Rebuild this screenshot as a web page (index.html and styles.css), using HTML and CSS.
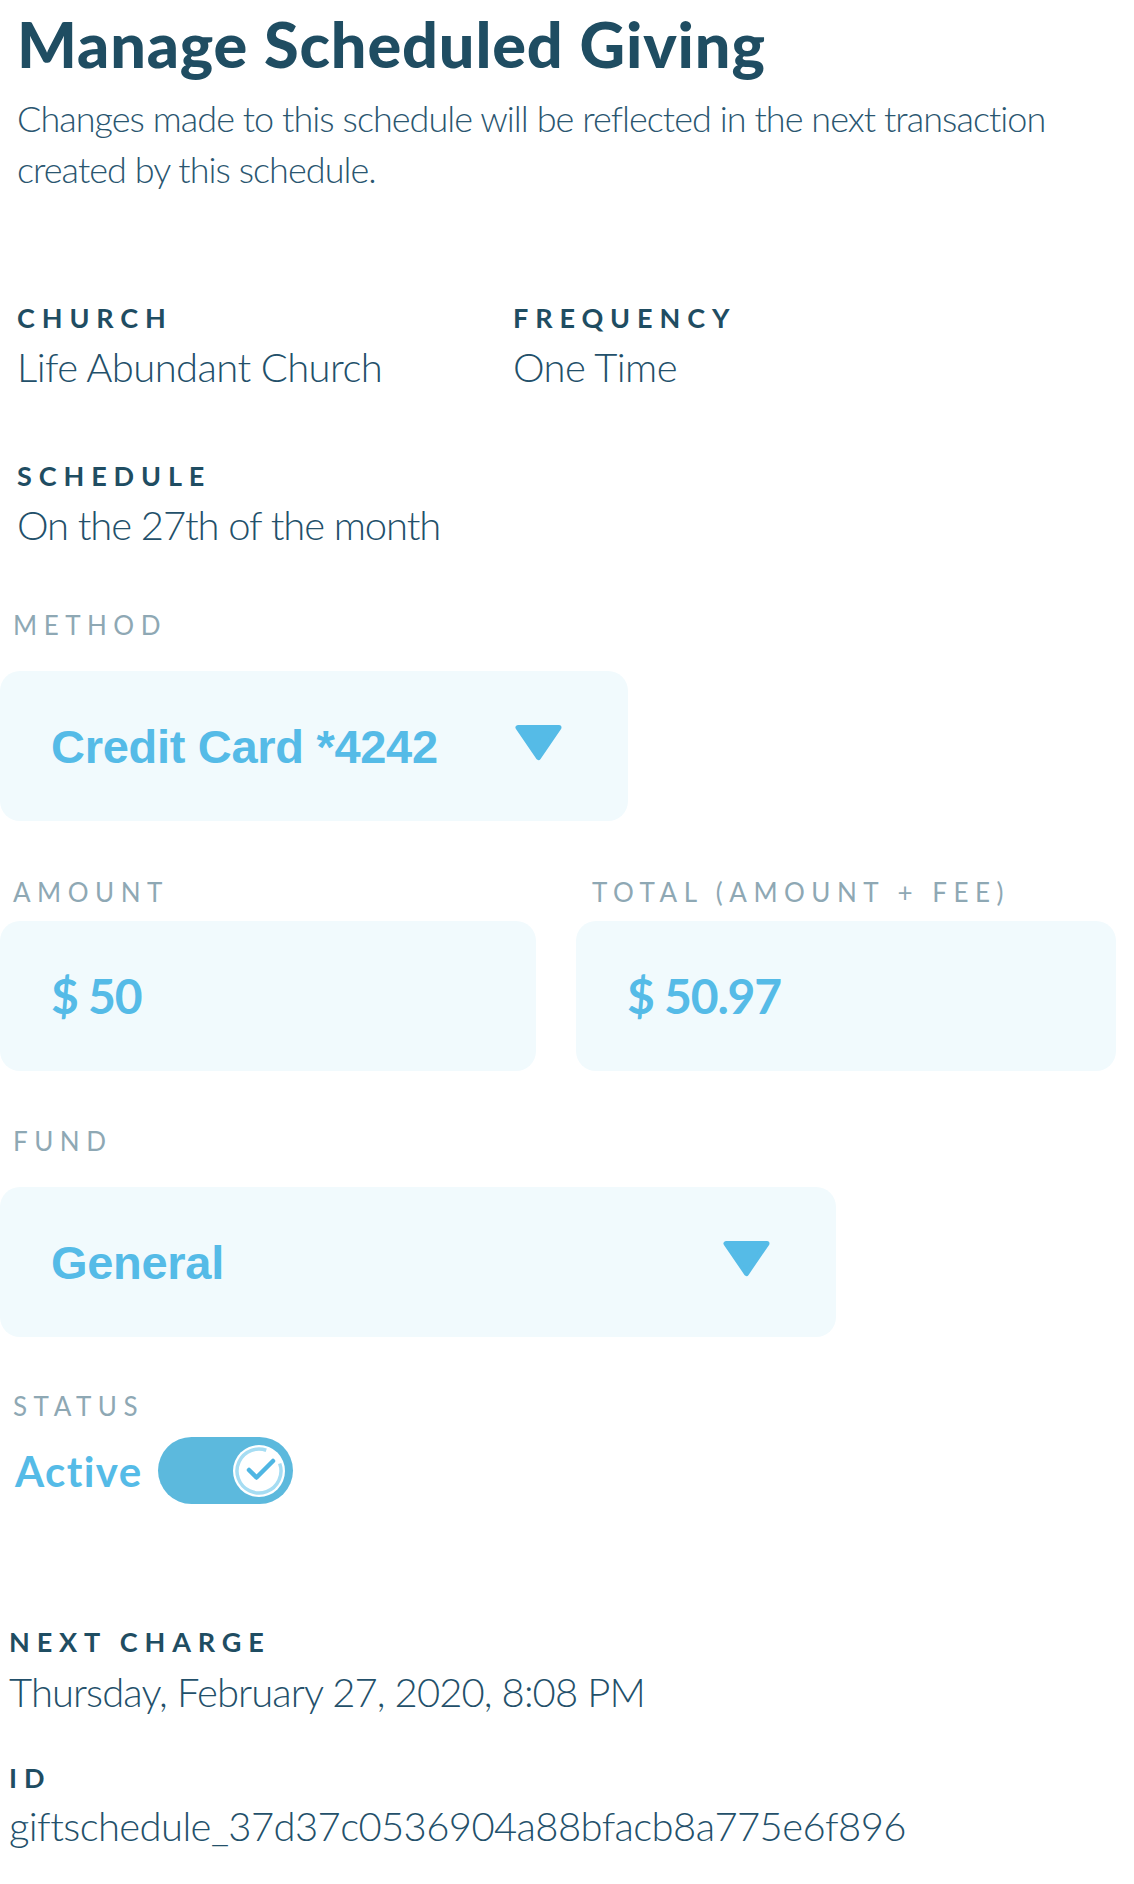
FILE: index.html
```html
<!DOCTYPE html>
<html lang="en">
<head>
<meta charset="utf-8">
<title>Manage Scheduled Giving</title>
<link rel="stylesheet" href="styles.css">
</head>
<body>
<main class="page">
  <header class="intro">
    <h1 class="title">Manage Scheduled Giving</h1>
    <p class="lead">Changes made to this schedule will be reflected in the next transaction created by this schedule.</p>
  </header>

  <section class="details">
    <div class="detail-row">
      <div class="detail">
        <div class="detail-label">Church</div>
        <div class="detail-value">Life Abundant Church</div>
      </div>
      <div class="detail">
        <div class="detail-label">Frequency</div>
        <div class="detail-value">One Time</div>
      </div>
    </div>
    <div class="detail detail-schedule">
      <div class="detail-label">Schedule</div>
      <div class="detail-value">On the 27th of the month</div>
    </div>
  </section>

  <section class="form">
    <div class="field field-method">
      <div class="field-label">Method</div>
      <div class="select select-method">
        <span class="select-text">Credit Card *4242</span>
        <svg class="caret" width="49" height="37" viewBox="0 0 49 37" aria-hidden="true"><path d="M4 3.5 H45 L24.5 33.5 Z" fill="#55bbe7" stroke="#55bbe7" stroke-width="5" stroke-linejoin="round"/></svg>
      </div>
    </div>

    <div class="field-row">
      <div class="field field-amount">
        <div class="field-label">Amount</div>
        <div class="money-box"><span class="money">$ 50</span></div>
      </div>
      <div class="field field-total">
        <div class="field-label">Total (Amount + Fee)</div>
        <div class="money-box"><span class="money">$ 50.97</span></div>
      </div>
    </div>

    <div class="field field-fund">
      <div class="field-label">Fund</div>
      <div class="select select-fund">
        <span class="select-text">General</span>
        <svg class="caret" width="49" height="37" viewBox="0 0 49 37" aria-hidden="true"><path d="M4 3.5 H45 L24.5 33.5 Z" fill="#55bbe7" stroke="#55bbe7" stroke-width="5" stroke-linejoin="round"/></svg>
      </div>
    </div>

    <div class="field field-status">
      <div class="field-label">Status</div>
      <div class="status-row">
        <span class="status-text">Active</span>
        <span class="toggle">
          <svg class="knob" width="54" height="54" viewBox="0 0 54 54" aria-hidden="true">
            <circle cx="27" cy="27" r="26" fill="#ffffff"/>
            <circle cx="27" cy="27" r="22" fill="none" stroke="#a6ddf3" stroke-width="3.5" stroke-dasharray="118 20" transform="rotate(-20 27 27)"/>
            <circle cx="27" cy="27" r="19.5" fill="#ffffff"/>
            <path d="M17 26 L24.5 33.5 L41 17" fill="none" stroke="#4fb6e3" stroke-width="4.5" stroke-linecap="round" stroke-linejoin="round"/>
          </svg>
        </span>
      </div>
    </div>
  </section>

  <section class="meta">
    <div class="meta-item">
      <div class="detail-label">Next Charge</div>
      <div class="detail-value">Thursday, February 27, 2020, 8:08 PM</div>
    </div>
    <div class="meta-item meta-id">
      <div class="detail-label">ID</div>
      <div class="detail-value">giftschedule_37d37c0536904a88bfacb8a775e6f896</div>
    </div>
  </section>
</main>
</body>
</html>
```

FILE: styles.css
```css
* { box-sizing: border-box; }

html, body {
  margin: 0;
  padding: 0;
  background: #ffffff;
}

body {
  font-family: "Lato", "Open Sans", sans-serif;
  color: #23506a;
  width: 1134px;
}

.page {
  display: flex;
  flex-direction: column;
}

/* Intro */
.intro {
  padding-left: 17px;
}

.title {
  margin: 7px 0 0;
  font-size: 63px;
  line-height: 74px;
  font-weight: 900;
  color: #1f4d62;
  letter-spacing: 0.85px;
}

.lead {
  margin: 12px 0 0;
  font-size: 36px;
  line-height: 51px;
  font-weight: 300;
  color: #2a5670;
  letter-spacing: -0.95px;
  max-width: 1080px;
}

/* Details */
.details {
  padding-left: 17px;
  margin-top: 107px;
  display: flex;
  flex-direction: column;
}

.detail-row {
  display: grid;
  grid-template-columns: 496px 1fr;
}

.detail-schedule {
  margin-top: 69px;
}

.detail-label {
  font-size: 27px;
  line-height: 32px;
  font-weight: 700;
  text-transform: uppercase;
  letter-spacing: 0.255em;
  color: #1f4d62;
}

.detail-value {
  margin-top: 9px;
  font-size: 40px;
  line-height: 48px;
  font-weight: 300;
  color: #23506a;
  letter-spacing: -0.6px;
}

.detail-schedule .detail-value {
  letter-spacing: -1.1px;
}

/* Form */
.form {
  margin-top: 60px;
  display: flex;
  flex-direction: column;
}

.field-label {
  padding-left: 13px;
  font-size: 26px;
  line-height: 32px;
  font-weight: 400;
  text-transform: uppercase;
  letter-spacing: 0.25em;
  color: #8ea8b4;
}

.select {
  margin-top: 30px;
  height: 150px;
  border-radius: 20px;
  background: #f1fafd;
  display: flex;
  align-items: center;
  justify-content: space-between;
  padding: 0 65px 0 51px;
}

.select-method { width: 628px; }
.select-fund { width: 836px; }

.select-text {
  font-family: "Liberation Sans", Arial, sans-serif;
  font-weight: 700;
  font-size: 47px;
  line-height: 1;
  color: #55bbe7;
  letter-spacing: -0.3px;
}

.caret {
  display: block;
  flex: none;
  margin-top: -8px;
}

.field-row {
  margin-top: 55px;
  display: grid;
  grid-template-columns: 536px 540px;
  column-gap: 40px;
}

.field-total .field-label {
  padding-left: 16px;
}

.money-box {
  margin-top: 13px;
  height: 150px;
  border-radius: 20px;
  background: #f1fafd;
  display: flex;
  align-items: center;
  padding-left: 51px;
}

.money {
  font-size: 48px;
  line-height: 1;
  font-weight: 700;
  color: #55bbe7;
  letter-spacing: -1.2px;
}

.field-fund {
  margin-top: 54px;
}

.field-status {
  margin-top: 53px;
}

.status-row {
  margin-top: 15px;
  padding-left: 15px;
  display: flex;
  align-items: center;
  gap: 16px;
}

.status-text {
  font-size: 42px;
  line-height: 48px;
  font-weight: 700;
  color: #55bbe7;
  letter-spacing: 1.4px;
}

.toggle {
  width: 135px;
  height: 67px;
  border-radius: 34px;
  background: #5cb9dd;
  display: flex;
  align-items: center;
  justify-content: flex-end;
  padding-right: 7px;
}

.knob { display: block; }

/* Meta */
.meta {
  margin-top: 122px;
  padding-left: 9px;
  padding-bottom: 40px;
  display: flex;
  flex-direction: column;
}

.meta .detail-value {
  margin-top: 10px;
  font-size: 40px;
  letter-spacing: -0.9px;
}

.meta-id {
  margin-top: 46px;
}

.meta-id .detail-value {
  margin-top: 8px;
  letter-spacing: -0.6px;
}
```
